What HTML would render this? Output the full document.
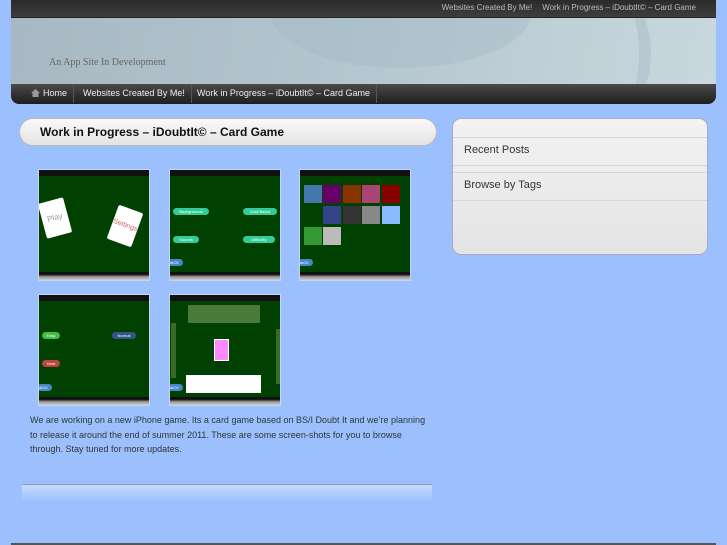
<!DOCTYPE html>
<html><head><meta charset="utf-8"><style>
*{margin:0;padding:0;box-sizing:border-box}
body{width:727px;height:545px;background:#9cc0fe;font-family:"Liberation Sans",sans-serif;position:relative;overflow:hidden}
.abs{position:absolute}
#top{left:11px;top:0;width:705px;height:18px;background:linear-gradient(#2a2a2a,#3e3e3e);font-size:8px;color:#bbb;text-align:right;padding-right:20px;line-height:16px;border-bottom:1px solid #222}
#top span{margin-left:10px}
#ban{left:11px;top:18px;width:705px;height:66px;background:linear-gradient(100deg,#a7b8c2 0%,#b4c6cf 50%,#c9d8de 100%);overflow:hidden}
#ban .sw{position:absolute;left:260px;top:-60px;width:260px;height:110px;border-radius:50%;background:rgba(160,182,194,.35)}
#ban .sw2{position:absolute;left:560px;top:-30px;width:80px;height:130px;border-right:12px solid rgba(160,182,194,.4);border-radius:50%}
#ban .tag{position:absolute;left:38px;top:39px;font-family:"Liberation Serif",serif;font-size:10px;color:#666}
#nav{left:11px;top:84px;width:705px;height:20px;background:linear-gradient(#4a4a4a,#1e1e1e);border-radius:0 0 8px 8px;font-size:9px;color:#eee;line-height:19px}
#nav span{position:absolute;top:0;border-right:1px solid #555;padding:0 6px}
#tit{left:19px;top:118px;width:418px;height:28px;border-radius:14px;background:linear-gradient(#fafafa,#e3e3e3);border:1px solid #bbb;font-weight:bold;font-size:12px;line-height:26px;padding-left:20px;color:#111}
.th{position:absolute;width:112px;height:112px;border:1px solid #c8d4e8;background:#004000;overflow:hidden}
.th:before{content:"";position:absolute;left:0;top:0;right:0;height:6px;background:#111}
.th:after{content:"";position:absolute;left:0;bottom:0;right:0;height:8px;background:linear-gradient(#111 30%,#999 60%,#ccc)}
.pill{position:absolute;height:7px;border-radius:4px;background:#3c9;font-size:4px;color:#fff;line-height:7px;text-align:center}
.back{position:absolute;left:-2px;bottom:14px;width:15px;height:7px;border-radius:4px;background:#48c;font-size:4px;color:#fff;line-height:7px}
.card{position:absolute;width:26px;height:36px;background:#fff;border-radius:2px;font-size:8px;color:#999;text-align:center;line-height:36px}
.sq{position:absolute;width:18px;height:18px}
#txt{left:30px;top:413px;width:420px;font-size:9px;color:#333;line-height:14.5px;white-space:nowrap}
#foot{left:22px;top:484px;width:410px;height:18px;background:linear-gradient(#c4dcff,#9cc0fe);border-top:1px solid #99a}
#side{left:452px;top:118px;width:256px;height:137px;border-radius:9px;background:linear-gradient(#f2f2f2,#e4e4e4);border:1px solid #aab}
#side .l{position:absolute;left:0;right:0;height:1px;background:#d4d8dc}
#side .t{position:absolute;left:11px;font-size:11px;color:#333}
#bot{left:11px;top:543px;width:705px;height:2px;background:#555}
</style></head><body>
<div id="top" class="abs"><span>Websites Created By Me!</span><span>Work in Progress – iDoubtIt© – Card Game</span></div>
<div id="ban" class="abs"><div class="sw"></div><div class="sw2"></div><div class="tag">An App Site In Development</div></div>
<div id="nav" class="abs">
<span style="left:10px;padding-left:10px"><svg width="9" height="8" viewBox="0 0 9 8" style="vertical-align:-1px;margin-right:3px"><path d="M0 4L4.5 0 9 4H7.5V8H1.5V4Z" fill="#999"/></svg>Home</span>
<span style="left:66px">Websites Created By Me!</span>
<span style="left:180px">Work in Progress – iDoubtIt© – Card Game</span>
</div>
<div id="tit" class="abs">Work in Progress – iDoubtIt© – Card Game</div>

<div class="th" style="left:38px;top:169px">
<div class="card" style="left:3px;top:30px;transform:rotate(-15deg)">Play</div>
<div class="card" style="left:73px;top:38px;transform:rotate(20deg);color:#c66;font-size:7px">Settings</div></div>
<div class="th" style="left:169px;top:169px">
<div class="pill" style="left:3px;top:38px;width:36px">Backgrounds</div><div class="pill" style="left:73px;top:38px;width:34px">Card Backs</div>
<div class="pill" style="left:3px;top:66px;width:26px">Sounds</div><div class="pill" style="left:73px;top:66px;width:32px">Difficulty</div><div class="back">BACK</div></div>
<div class="th" style="left:299px;top:169px">
<div class="sq" style="left:4px;top:15px;background:#47a"></div><div class="sq" style="left:23px;top:15px;background:#606"></div><div class="sq" style="left:43px;top:15px;background:#830"></div><div class="sq" style="left:62px;top:15px;background:#a47"></div><div class="sq" style="left:82px;top:15px;background:#800"></div>
<div class="sq" style="left:23px;top:36px;background:#348"></div><div class="sq" style="left:43px;top:36px;background:#333"></div><div class="sq" style="left:62px;top:36px;background:#888"></div><div class="sq" style="left:82px;top:36px;background:#8bf"></div>
<div class="sq" style="left:4px;top:57px;background:#393"></div><div class="sq" style="left:23px;top:57px;background:#bbb"></div><div class="back">BACK</div></div>
<div class="th" style="left:38px;top:294px">
<div class="pill" style="left:3px;top:37px;width:18px;background:#4b4">Easy</div><div class="pill" style="left:73px;top:37px;width:24px;background:#358">Normal</div>
<div class="pill" style="left:3px;top:65px;width:18px;background:#b44">Hard</div><div class="back">BACK</div></div>
<div class="th" style="left:169px;top:294px">
<div style="position:absolute;left:18px;top:10px;width:72px;height:18px;background:#4a7a3a"></div>
<div style="position:absolute;left:1px;top:28px;width:5px;height:55px;background:#3a6a2a"></div>
<div style="position:absolute;left:106px;top:34px;width:5px;height:55px;background:#3a6a2a"></div>
<div style="position:absolute;left:44px;top:44px;width:15px;height:22px;background:#f8f;border:1px solid #fff"></div>
<div style="position:absolute;left:16px;top:80px;width:75px;height:18px;background:#fff"></div><div class="back">BACK</div></div>

<div id="txt" class="abs">We are working on a new iPhone game. Its a card game based on BS/I Doubt It and we’re planning<br>to release it around the end of summer 2011. These are some screen-shots for you to browse<br>through. Stay tuned for more updates.</div>
<div id="foot" class="abs"></div>
<div id="side" class="abs">
<div class="l" style="top:18px"></div><div class="t" style="top:25px">Recent Posts</div>
<div class="l" style="top:46px"></div><div class="l" style="top:53px"></div>
<div class="t" style="top:60px">Browse by Tags</div><div class="l" style="top:81px"></div>
</div>
<div id="bot" class="abs"></div>
</body></html>
